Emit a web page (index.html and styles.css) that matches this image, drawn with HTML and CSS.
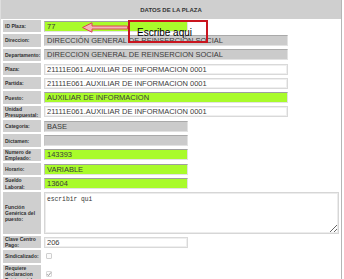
FILE: index.html
```html
<!DOCTYPE html>
<html lang="es">
<head>
<meta charset="utf-8">
<title>Datos de la plaza</title>
<link rel="stylesheet" href="styles.css">
</head>
<body>
<div class="panel">
  <div class="head">DATOS DE LA PLAZA</div>
  <div class="form">
    <div class="lbl">ID Plaza:</div>
    <div class="val"><input class="inp green sm" value="77"></div>

    <div class="lbl">Direccion:</div>
    <div class="val"><input class="inp gray wide" value="DIRECCIÓN GENERAL DE REINSERCIÓN SOCIAL"></div>

    <div class="lbl">Departamento:</div>
    <div class="val"><input class="inp gray wide" value="DIRECCION GENERAL DE REINSERCION SOCIAL"></div>

    <div class="lbl">Plaza:</div>
    <div class="val"><input class="inp white wide" value="21111E061.AUXILIAR DE INFORMACION 0001"></div>

    <div class="lbl">Partida:</div>
    <div class="val"><input class="inp white wide" value="21111E061.AUXILIAR DE INFORMACION 0001"></div>

    <div class="lbl">Puesto:</div>
    <div class="val"><input class="inp green wide" value="AUXILIAR DE INFORMACION"></div>

    <div class="lbl">Unidad Presupuestal:</div>
    <div class="val"><input class="inp white wide" value="21111E061.AUXILIAR DE INFORMACION 0001"></div>

    <div class="lbl">Categoria:</div>
    <div class="val"><input class="inp gray sm" value="BASE"></div>

    <div class="lbl">Dictamen:</div>
    <div class="val"><input class="inp gray sm" value=""></div>

    <div class="lbl">Numero de Empleado:</div>
    <div class="val"><input class="inp green sm" value="143393"></div>

    <div class="lbl">Horario:</div>
    <div class="val"><input class="inp green sm" value="VARIABLE"></div>

    <div class="lbl">Sueldo Laboral:</div>
    <div class="val"><input class="inp green sm" value="13604"></div>

    <div class="lbl">Función Genérica del puesto:</div>
    <div class="val"><textarea class="area">escribir qui</textarea></div>

    <div class="lbl">Clave Centro Pago:</div>
    <div class="val"><input class="inp white sm" value="206"></div>

    <div class="lbl">Sindicalizado:</div>
    <div class="val"><span class="chk"></span></div>

    <div class="lbl tall">Requiere declaracion Patrimonial:</div>
    <div class="val"><span class="chk on"><svg viewBox="0 0 6 6" width="6" height="6"><path d="M1 3.2 L2.4 4.6 L5 1.4" fill="none" stroke="#9a9a9a" stroke-width="1"/></svg></span></div>
  </div>

  <div class="callout">
    <svg class="arrow" viewBox="0 0 46 11" width="46" height="11">
      <polygon points="0.5,5.5 10,0.8 10,4 45.5,4 45.5,7 10,7 10,10.2" fill="#f3b3b8" stroke="#dc4650" stroke-width="1"/>
    </svg>
    <div class="note">Escribe aqui</div>
  </div>
</div>
</body>
</html>
```

FILE: styles.css
```css
html, body {
  margin: 0;
  padding: 0;
  background: #ffffff;
}

body {
  font-family: "Liberation Sans", Arial, sans-serif;
}

.panel {
  position: relative;
  width: 342px;
  box-sizing: border-box;
  border-left: 1px solid #dedede;
  border-right: 1px solid #b5b5b5;
  padding-bottom: 4px;
}

.head {
  height: 19px;
  background: #cfcfcf;
  display: flex;
  align-items: center;
  justify-content: center;
  font-weight: bold;
  font-size: 6px;
  color: #333333;
  padding-top: 1px;
  box-sizing: border-box;
}

.form {
  display: grid;
  grid-template-columns: 38px 1fr;
  grid-auto-rows: minmax(12.3px, auto);
  column-gap: 2px;
  row-gap: 2px;
  padding: 1px 0 0 2px;
}

.lbl {
  background: #cfcfcf;
  color: #2f2f2f;
  font-weight: bold;
  font-size: 5px;
  line-height: 6.2px;
  padding: 0 1px 0 2px;
  display: flex;
  align-items: center;
}

.lbl.tall {
  min-height: 18px;
}

.val {
  display: flex;
  align-items: center;
  padding-left: 1px;
}

.inp {
  box-sizing: border-box;
  height: 11px;
  margin: 0;
  padding: 0 2px;
  font-family: "Liberation Sans", Arial, sans-serif;
  font-size: 7.5px;
  color: #3a3a3a;
  border: 1px solid #dddddd;
  outline: none;
}

.inp.gray {
  background: #cbcbcb;
  border-color: #a9a9a9 #e2e2e2 #e2e2e2 #c4c4c4;
}

.inp.green {
  background: #a9fb2b;
  border-color: #9e9e9e #e2e2e2 #e2e2e2 #c4c4c4;
}

.inp.white {
  background: #ffffff;
  border: 1px solid #d9d9d9;
  box-shadow: inset 0 0 0 1px #efefef;
}

.inp.wide {
  width: 244px;
}

.inp.sm {
  width: 144px;
}

.area {
  box-sizing: border-box;
  width: 295px;
  height: 42px;
  margin: 0;
  padding: 3px 2px;
  font-family: "Liberation Mono", "Courier New", monospace;
  font-size: 6.3px;
  color: #333333;
  border: 1px solid #d6d6d6;
  box-shadow: inset 0 0 0 1px #ececec;
  resize: both;
  outline: none;
}

.chk {
  box-sizing: border-box;
  width: 6px;
  height: 6px;
  margin-left: 2px;
  border: 1px solid #cfcfcf;
  border-radius: 1px;
  background: #fbfbfb;
  display: flex;
  align-items: center;
  justify-content: center;
}

.chk.on {
  border-color: #d8d8d8;
}

.chk svg {
  display: block;
  flex: none;
  margin: -1px;
}

.callout {
  position: absolute;
  left: 81px;
  top: 20px;
  display: flex;
  align-items: flex-start;
}

.arrow {
  display: block;
  margin-top: 2px;
}

.note {
  box-sizing: border-box;
  width: 80px;
  height: 23px;
  border: 2px solid #c9141e;
  font-family: "Liberation Sans", Arial, sans-serif;
  font-size: 10px;
  color: #000000;
  padding: 6px 0 0 7px;
  line-height: 10px;
}
```
